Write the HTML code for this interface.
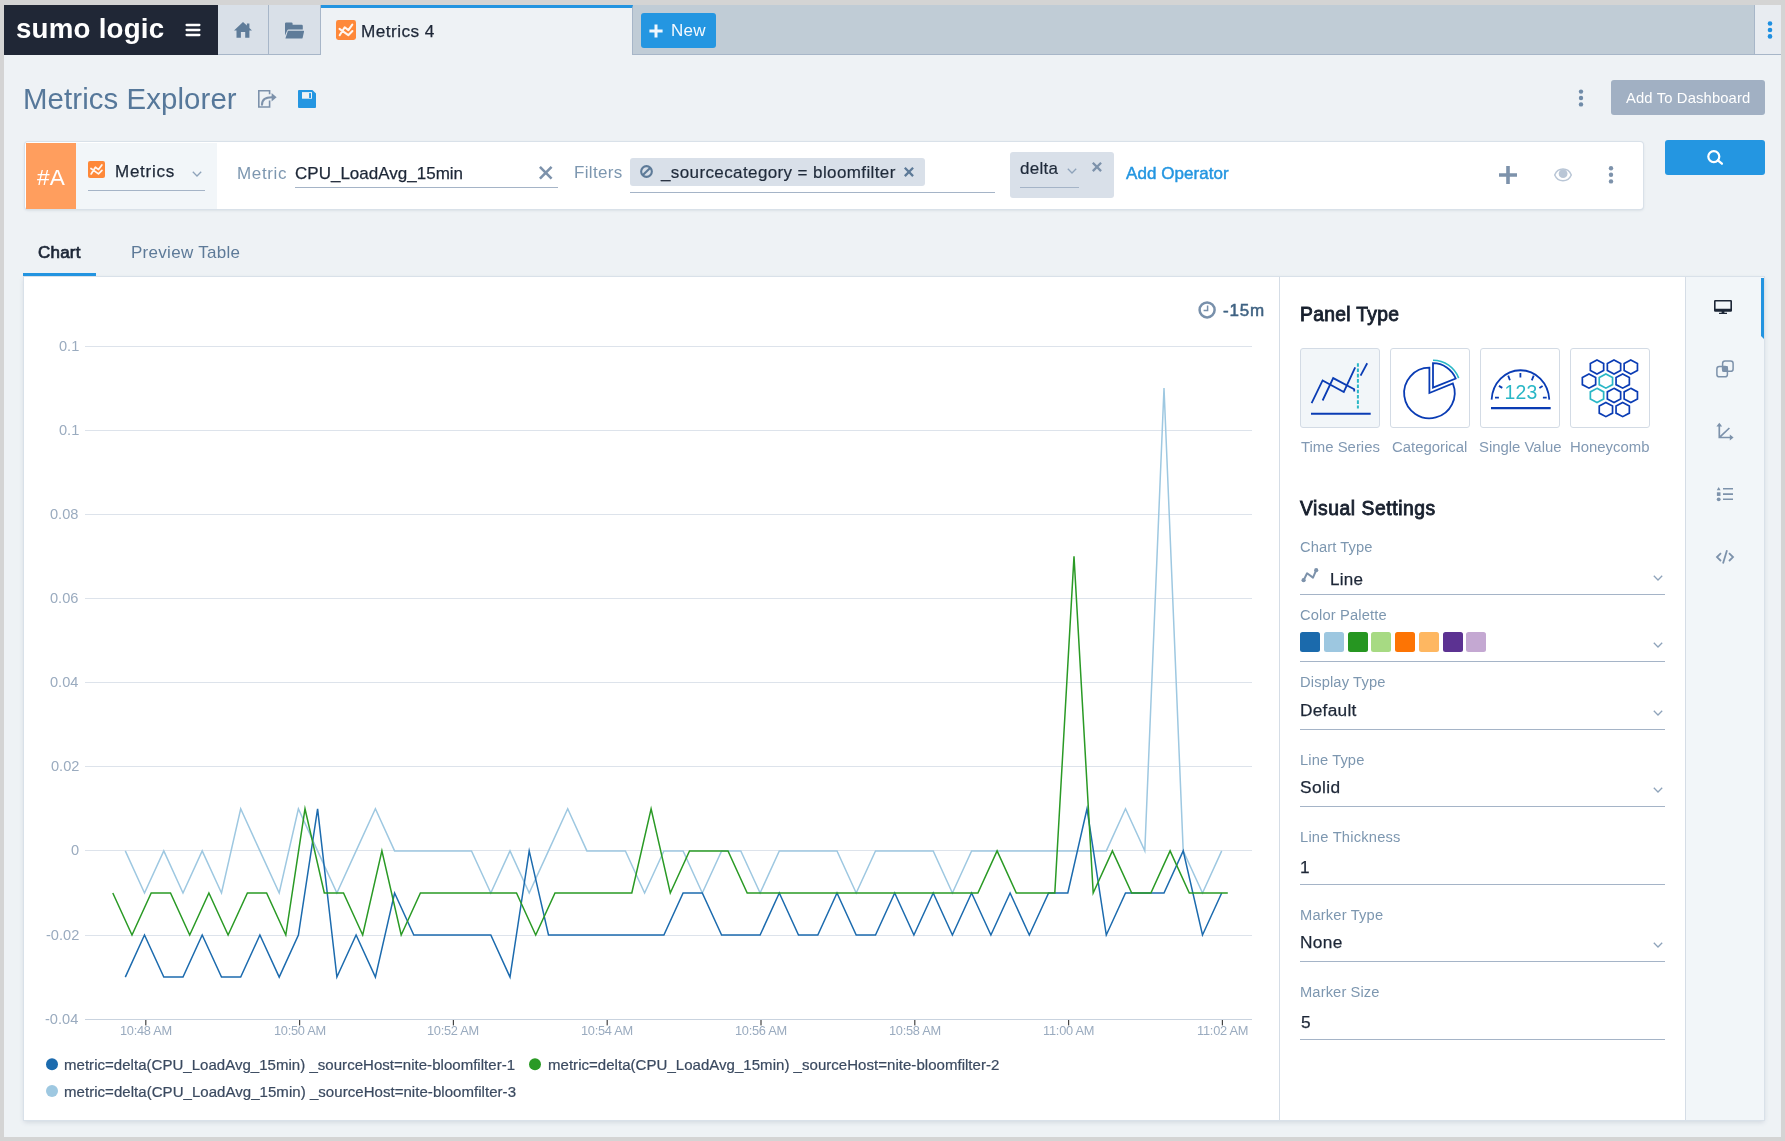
<!DOCTYPE html>
<html lang="en">
<head>
<meta charset="utf-8">
<title>Metrics Explorer - Sumo Logic</title>
<style>
html,body{margin:0;padding:0;background:#d4d4d4;}
body{width:1785px;height:1141px;position:relative;overflow:hidden;background:#d4d4d4;
 font-family:"Liberation Sans",Arial,Helvetica,sans-serif;}
.abs,.t,svg{position:absolute;}
.t{white-space:nowrap;display:block;will-change:transform;}
.hl{position:absolute;height:1px;background:#a5b4c7;}
svg{overflow:visible;}
</style>
</head>
<body>
<div class="abs" id="app" style="left:4px;top:5px;width:1777px;height:1132px;background:#eef2f5;"></div>
<div class="abs" style="left:4px;top:5px;width:1777px;height:49px;background:#c0ccd6;border-bottom:1px solid #a7b6c8;"></div>
<div class="abs" style="left:4px;top:5px;width:214px;height:50px;background:#202736;"></div>
<span class="t" style="left:16.43px;top:14.60px;font-size:27.7px;line-height:27.7px;color:#ffffff;letter-spacing:0.220px;font-weight:bold;">sumo logic</span>
<svg style="left:185px;top:23px" width="16" height="14" viewBox="0 0 16 14"><g stroke="#fff" stroke-width="2.3" stroke-linecap="round"><path d="M1.6 2h12.8M1.6 7h12.8M1.6 12h12.8"/></g></svg>
<div class="abs" style="left:218px;top:5px;width:50px;height:49px;background:#d9e0e8;border-right:1px solid #a7b6c8;"></div>
<svg style="left:234px;top:22px" width="18" height="16" viewBox="0 0 18 16"><path fill="#5f7c99" d="M9 0 L12.9 3.6 V1.4 H15.4 V6 L18 8.5 H15.4 V15.8 H11.2 V10 H6.9 V15.8 H2.5 V8.5 H0 Z"/></svg>
<div class="abs" style="left:269px;top:5px;width:51px;height:49px;background:#d9e0e8;border-right:1px solid #a7b6c8;"></div>
<svg style="left:285px;top:22px" width="19" height="17" viewBox="0 0 19 17"><path fill="#5f7c99" d="M0 1.6 Q0 .4 1.2 .4 H6.4 Q7.6 .4 7.6 1.6 V2.8 H16.6 Q17.8 2.8 17.8 4 V7.4 H3.6 Q2.6 7.4 2.2 8.4 L0 13.6 Z M2.9 8.8 H18.4 Q19.3 8.8 19 9.7 L17.6 15.9 Q17.4 16.6 16.6 16.6 H0.4 Z"/></svg>
<div class="abs" style="left:321px;top:5px;width:312px;height:50px;background:#eef2f5;border-top:3px solid #2394e0;box-sizing:border-box;border-right:1px solid #a7b6c8;"></div>
<svg style="left:336px;top:20px" width="20" height="20" viewBox="0 0 20 20"><rect width="20" height="20" rx="2.4" fill="#fe8839"/><path d="M3.7 15.2 L8.7 7.3 L12.4 10.1 L16.3 4.6 M3.5 8.8 L12.3 15.2 L16.4 11" fill="none" stroke="#fff" stroke-width="2.05" stroke-linecap="round" stroke-linejoin="round" opacity=".92"/></svg>
<span class="t" style="left:360.99px;top:22.80px;font-size:17.2px;line-height:17.2px;color:#1d2737;letter-spacing:0.444px;-webkit-text-stroke:0.25px #1d2737;">Metrics 4</span>
<div class="abs" style="left:641px;top:13px;width:75px;height:35px;background:#2496e1;border-radius:3px;"></div>
<svg style="left:648.5px;top:23.6px" width="14" height="14" viewBox="0 0 14 14"><path d="M7 .4V13.6M.4 7H13.6" stroke="#f1f8fe" stroke-width="3" fill="none"/></svg>
<span class="t" style="left:670.81px;top:22.00px;font-size:17px;line-height:17px;color:#f4f9fe;letter-spacing:0.272px;">New</span>
<div class="abs" style="left:1754px;top:5px;width:27px;height:49px;background:#e8ecf1;border-left:1px solid #a7b6c8;box-sizing:border-box;"></div>
<svg style="left:1766px;top:19px" width="8" height="22" viewBox="0 0 8 22"><g fill="#1e8fe1"><circle cx="4" cy="4.5" r="2.3"/><circle cx="4" cy="11" r="2.3"/><circle cx="4" cy="17.4" r="2.3"/></g></svg>
<span class="t" style="left:23.19px;top:83.80px;font-size:29.4px;line-height:29.4px;color:#56789a;letter-spacing:0.088px;">Metrics Explorer</span>
<svg style="left:257px;top:89px" width="21" height="20" viewBox="0 0 21 20"><g fill="none" stroke="#7d92ab"><path d="M12.6 5.2V1.8H1.8V18H12.6V11.4" stroke-width="1.6"/><path d="M5 15.8C5 10.6 8 8.3 14.8 8.3" stroke-width="2.1" stroke-linecap="round"/></g><path d="M14.6 4 L19.6 8.2 L14.6 12.4 Z" fill="#7d92ab"/></svg>
<svg style="left:298px;top:90px" width="18" height="18" viewBox="0 0 18 18"><path fill="#2496e1" d="M1 0H14.4L18 3.4V17Q18 18 17 18H1Q0 18 0 17V1Q0 0 1 0Z"/><rect x="4" y="2.1" width="10" height="6.6" fill="#eef2f5"/><rect x="11.1" y="3.1" width="1.9" height="4.9" fill="#2496e1"/></svg>
<svg style="left:1577px;top:88px" width="8" height="22" viewBox="0 0 8 22"><g fill="#6f8ba8"><circle cx="4" cy="3.6" r="2.2"/><circle cx="4" cy="10" r="2.2"/><circle cx="4" cy="16.4" r="2.2"/></g></svg>
<div class="abs" style="left:1611px;top:80px;width:154px;height:35px;background:#a1b0c3;border-radius:3px;"></div>
<span class="t" style="left:1626.27px;top:91.00px;font-size:14.8px;line-height:14.8px;color:#ffffff;letter-spacing:0.131px;">Add To Dashboard</span>
<div class="abs" style="left:25px;top:142px;width:1618px;height:67px;background:#fff;border-radius:3px;box-shadow:0 0 0 1px #d9e1e9,0 1px 3px rgba(60,80,110,.22);"></div>
<div class="abs" style="left:26px;top:143px;width:50px;height:66px;background:#ff9e5e;"></div>
<span class="t" style="left:37.10px;top:167.10px;font-size:22.6px;line-height:22.6px;color:#ffffff;letter-spacing:0.100px;">#A</span>
<div class="abs" style="left:76px;top:143px;width:141px;height:66px;background:#f2f6f9;"></div>
<svg style="left:88px;top:161px" width="17" height="17" viewBox="0 0 20 20"><rect width="20" height="20" rx="2.4" fill="#fe8839"/><path d="M3.7 15.2 L8.7 7.3 L12.4 10.1 L16.3 4.6 M3.5 8.8 L12.3 15.2 L16.4 11" fill="none" stroke="#fff" stroke-width="2.05" stroke-linecap="round" stroke-linejoin="round" opacity=".92"/></svg>
<span class="t" style="left:115.01px;top:162.80px;font-size:17px;line-height:17px;color:#1d2737;letter-spacing:0.739px;-webkit-text-stroke:0.25px #1d2737;">Metrics</span>
<svg style="left:192.4px;top:170.6px" width="10" height="6" viewBox="0 0 10 6"><path d="M.8 .8 L5 5 L9.2 .8" fill="none" stroke="#8ea3ba" stroke-width="1.3"/></svg>
<div class="hl" style="left:88px;top:190px;width:117px;"></div>
<span class="t" style="left:237.21px;top:165.00px;font-size:17px;line-height:17px;color:#7d97b0;letter-spacing:0.633px;">Metric</span>
<span class="t" style="left:295.34px;top:165.00px;font-size:17px;line-height:17px;color:#1d2737;letter-spacing:0.010px;-webkit-text-stroke:0.25px #1d2737;">CPU_LoadAvg_15min</span>
<div class="hl" style="left:295px;top:187px;width:263px;"></div>
<svg style="left:538.8px;top:166.3px" width="13.5" height="13.5" viewBox="0 0 13.5 13.5"><path d="M0.92 0.92 L12.58 12.58 M12.58 0.92 L0.92 12.58" fill="none" stroke="#7d92ab" stroke-width="2.6"/></svg>
<span class="t" style="left:573.61px;top:164.00px;font-size:17px;line-height:17px;color:#7d97b0;letter-spacing:0.339px;">Filters</span>
<div class="abs" style="left:630px;top:158px;width:295px;height:28px;background:#d9e0e9;border-radius:3px;"></div>
<svg style="left:639.8px;top:165px" width="13" height="13" viewBox="0 0 13 13"><circle cx="6.5" cy="6.5" r="5.35" fill="none" stroke="#5d7a98" stroke-width="2.1"/><path d="M2.9 10.1 L10.1 2.9" stroke="#5d7a98" stroke-width="2.1"/></svg>
<span class="t" style="left:661.26px;top:164.00px;font-size:17px;line-height:17px;color:#1f2a3a;letter-spacing:0.388px;-webkit-text-stroke:0.2px #1f2a3a;">_sourcecategory = bloomfilter</span>
<svg style="left:903.5px;top:167.4px" width="9.9" height="9.9" viewBox="0 0 9.9 9.9"><path d="M0.81 0.81 L9.09 9.09 M9.09 0.81 L0.81 9.09" fill="none" stroke="#5d7a98" stroke-width="2.3"/></svg>
<div class="hl" style="left:630px;top:192px;width:365px;"></div>
<div class="abs" style="left:1010px;top:152px;width:104px;height:46px;background:#d9e0e9;border-radius:3px;"></div>
<span class="t" style="left:1020.09px;top:160.00px;font-size:17px;line-height:17px;color:#1f2a3a;letter-spacing:0.263px;-webkit-text-stroke:0.2px #1f2a3a;">delta</span>
<svg style="left:1066.6px;top:168px" width="10" height="6" viewBox="0 0 10 6"><path d="M.8 .8 L5 5 L9.2 .8" fill="none" stroke="#8ea3ba" stroke-width="1.3"/></svg>
<div class="hl" style="left:1020px;top:187px;width:59px;"></div>
<svg style="left:1091.6px;top:161.8px" width="9.9" height="9.9" viewBox="0 0 9.9 9.9"><path d="M0.81 0.81 L9.09 9.09 M9.09 0.81 L0.81 9.09" fill="none" stroke="#7d92ab" stroke-width="2.3"/></svg>
<span class="t" style="left:1126.17px;top:165.00px;font-size:17px;line-height:17px;color:#2496e1;letter-spacing:0.060px;-webkit-text-stroke:0.45px #2496e1;">Add Operator</span>
<svg style="left:1499px;top:166px" width="18" height="18" viewBox="0 0 18 18"><path d="M9 0V18M0 9H18" stroke="#7d92ab" stroke-width="3.6" fill="none"/></svg>
<svg style="left:1554px;top:168px" width="18" height="14" viewBox="0 0 18 14"><path d="M.7 7 C4 -.9 14 -.9 17.3 7 C14 14.7 4 14.7 .7 7Z" fill="#fff" stroke="#b9c6d6" stroke-width="1.5"/><circle cx="9.1" cy="5.7" r="4.4" fill="#b9c6d6"/></svg>
<svg style="left:1607px;top:165px" width="8" height="20" viewBox="0 0 8 20"><g fill="#7d92ab"><circle cx="4" cy="3.3" r="2.2"/><circle cx="4" cy="9.8" r="2.2"/><circle cx="4" cy="16.4" r="2.2"/></g></svg>
<div class="abs" style="left:1665px;top:140px;width:100px;height:35px;background:#2496e1;border-radius:3px;"></div>
<svg style="left:1706px;top:149px" width="18" height="18" viewBox="0 0 18 18"><circle cx="7.8" cy="7.6" r="5.5" fill="none" stroke="#fff" stroke-width="2.2"/><path d="M11.9 11.3 L15.9 14.7" stroke="#fff" stroke-width="2.3" stroke-linecap="round"/></svg>
<span class="t" style="left:37.94px;top:243.90px;font-size:17px;line-height:17px;color:#1d2737;letter-spacing:0.204px;-webkit-text-stroke:0.7px #1d2737;">Chart</span>
<span class="t" style="left:131.21px;top:243.90px;font-size:17px;line-height:17px;color:#5d7a98;letter-spacing:0.286px;">Preview Table</span>
<div class="abs" style="left:23px;top:273px;width:73px;height:3px;background:#2394e0;"></div>
<div class="abs" style="left:24px;top:277px;width:1740px;height:843px;background:#fff;box-shadow:0 0 0 1px #d9e1e9,0 2px 5px rgba(60,80,110,.18);"></div>
<div class="abs" style="left:23px;top:273px;width:73px;height:3px;background:#2394e0;"></div>
<div class="abs" style="left:1279px;top:277px;width:1px;height:843px;background:#d5dde6;"></div>
<div class="abs" style="left:1685px;top:277px;width:79px;height:843px;background:#f2f6f9;border-left:1px solid #d5dde6;box-sizing:border-box;"></div>
<svg style="left:1761px;top:278px" width="3" height="61" viewBox="0 0 3 61"><path d="M0 0H3V61L0 58Z" fill="#2394e0"/></svg>
<svg style="left:0;top:0" width="1785" height="1141" viewBox="0 0 1785 1141">
<rect x="85" y="346" width="1167" height="1" fill="#dde3eb"/>
<rect x="85" y="430" width="1167" height="1" fill="#dde3eb"/>
<rect x="85" y="514" width="1167" height="1" fill="#dde3eb"/>
<rect x="85" y="598" width="1167" height="1" fill="#dde3eb"/>
<rect x="85" y="682" width="1167" height="1" fill="#dde3eb"/>
<rect x="85" y="766" width="1167" height="1" fill="#dde3eb"/>
<rect x="85" y="850" width="1167" height="1" fill="#dde3eb"/>
<rect x="85" y="935" width="1167" height="1" fill="#dde3eb"/>
<rect x="85" y="1019" width="1167" height="1" fill="#c9d3df"/>
<rect x="145.2" y="1020" width="1.2" height="5.4" fill="#444"/>
<rect x="299.0" y="1020" width="1.2" height="5.4" fill="#444"/>
<rect x="452.8" y="1020" width="1.2" height="5.4" fill="#444"/>
<rect x="606.6" y="1020" width="1.2" height="5.4" fill="#444"/>
<rect x="760.4" y="1020" width="1.2" height="5.4" fill="#444"/>
<rect x="914.2" y="1020" width="1.2" height="5.4" fill="#444"/>
<rect x="1068.0" y="1020" width="1.2" height="5.4" fill="#444"/>
<rect x="1221.8" y="1020" width="1.2" height="5.4" fill="#444"/>
<polyline points="125.3,850.9 144.5,893.0 163.8,850.9 183.0,893.0 202.2,850.9 221.5,893.0 240.7,808.8 259.9,850.9 279.2,893.0 298.4,808.8 317.6,850.9 336.9,893.0 356.1,850.9 375.4,808.8 394.6,850.9 413.8,850.9 433.1,850.9 452.3,850.9 471.5,850.9 490.8,893.0 510.0,850.9 529.2,893.0 548.5,850.9 567.7,808.8 586.9,850.9 606.2,850.9 625.4,850.9 644.6,893.0 663.9,850.9 683.1,850.9 702.3,893.0 721.6,850.9 740.8,850.9 760.1,893.0 779.3,850.9 798.5,850.9 817.8,850.9 837.0,850.9 856.2,893.0 875.5,850.9 894.7,850.9 913.9,850.9 933.2,850.9 952.4,893.0 971.6,850.9 990.9,850.9 1010.1,850.9 1029.3,850.9 1048.6,850.9 1067.8,850.9 1087.0,850.9 1106.3,850.9 1125.5,808.8 1144.8,850.9 1164.0,388.1 1183.2,850.9 1202.5,893.0 1221.7,850.9" fill="none" stroke="#9ec8e1" stroke-width="1.5" stroke-linejoin="miter" stroke-miterlimit="6"/>
<polyline points="125.3,977.1 144.5,935.0 163.8,977.1 183.0,977.1 202.2,935.0 221.5,977.1 240.7,977.1 259.9,935.0 279.2,977.1 298.4,935.0 317.6,808.8 336.9,977.1 356.1,935.0 375.4,977.1 394.6,893.0 413.8,935.0 433.1,935.0 452.3,935.0 471.5,935.0 490.8,935.0 510.0,977.1 529.2,850.9 548.5,935.0 567.7,935.0 586.9,935.0 606.2,935.0 625.4,935.0 644.6,935.0 663.9,935.0 683.1,893.0 702.3,893.0 721.6,935.0 740.8,935.0 760.1,935.0 779.3,893.0 798.5,935.0 817.8,935.0 837.0,893.0 856.2,935.0 875.5,935.0 894.7,893.0 913.9,935.0 933.2,893.0 952.4,935.0 971.6,893.0 990.9,935.0 1010.1,893.0 1029.3,935.0 1048.6,893.0 1067.8,893.0 1087.0,808.8 1106.3,935.0 1125.5,893.0 1144.8,893.0 1164.0,893.0 1183.2,850.9 1202.5,935.0 1221.7,893.0" fill="none" stroke="#1c6bae" stroke-width="1.5" stroke-linejoin="miter" stroke-miterlimit="6"/>
<polyline points="112.8,893.0 132.0,935.0 151.2,893.0 170.5,893.0 189.7,935.0 208.9,893.0 228.1,935.0 247.4,893.0 266.6,893.0 285.8,935.0 305.0,808.8 324.3,893.0 343.5,893.0 362.7,935.0 381.9,850.9 401.2,935.0 420.4,893.0 439.6,893.0 458.8,893.0 478.1,893.0 497.3,893.0 516.5,893.0 535.7,935.0 555.0,893.0 574.2,893.0 593.4,893.0 612.6,893.0 631.8,893.0 651.1,808.8 670.3,893.0 689.5,850.9 708.7,850.9 728.0,850.9 747.2,893.0 766.4,893.0 785.6,893.0 804.9,893.0 824.1,893.0 843.3,893.0 862.5,893.0 881.8,893.0 901.0,893.0 920.2,893.0 939.4,893.0 958.7,893.0 977.9,893.0 997.1,850.9 1016.3,893.0 1035.6,893.0 1054.8,893.0 1074.0,556.4 1093.2,893.0 1112.4,850.9 1131.7,893.0 1150.9,893.0 1170.1,850.9 1189.3,893.0 1208.6,893.0 1227.8,893.0" fill="none" stroke="#2a9a25" stroke-width="1.5" stroke-linejoin="miter" stroke-miterlimit="6"/>
<circle cx="52" cy="1064.2" r="6" fill="#1c6bae"/>
<circle cx="535" cy="1064.2" r="6" fill="#2a9a25"/>
<circle cx="52" cy="1091" r="6" fill="#9ec8e1"/>
<circle cx="1207.1" cy="309.9" r="7.5" fill="none" stroke="#7890ab" stroke-width="2.5"/>
<path d="M1207.6 305.4 V310.4 H1203.6" fill="none" stroke="#7890ab" stroke-width="1.5"/>
</svg>
<span class="t" style="left:58.62px;top:338.60px;font-size:14.6px;line-height:14.6px;color:#9aabbf;">0.1</span>
<span class="t" style="left:58.62px;top:422.60px;font-size:14.6px;line-height:14.6px;color:#9aabbf;">0.1</span>
<span class="t" style="left:50.42px;top:506.60px;font-size:14.6px;line-height:14.6px;color:#9aabbf;">0.08</span>
<span class="t" style="left:50.43px;top:590.60px;font-size:14.6px;line-height:14.6px;color:#9aabbf;">0.06</span>
<span class="t" style="left:50.21px;top:674.60px;font-size:14.6px;line-height:14.6px;color:#9aabbf;">0.04</span>
<span class="t" style="left:50.52px;top:758.60px;font-size:14.6px;line-height:14.6px;color:#9aabbf;">0.02</span>
<span class="t" style="left:70.65px;top:842.60px;font-size:14.6px;line-height:14.6px;color:#9aabbf;">0</span>
<span class="t" style="left:45.66px;top:927.60px;font-size:14.6px;line-height:14.6px;color:#9aabbf;">-0.02</span>
<span class="t" style="left:45.35px;top:1011.60px;font-size:14.6px;line-height:14.6px;color:#9aabbf;">-0.04</span>
<span class="t" style="left:119.73px;top:1025.10px;font-size:12.8px;line-height:12.8px;color:#9aabbf;letter-spacing:-0.265px;">10:48 AM</span>
<span class="t" style="left:273.52px;top:1025.10px;font-size:12.8px;line-height:12.8px;color:#9aabbf;letter-spacing:-0.265px;">10:50 AM</span>
<span class="t" style="left:427.32px;top:1025.10px;font-size:12.8px;line-height:12.8px;color:#9aabbf;letter-spacing:-0.265px;">10:52 AM</span>
<span class="t" style="left:581.12px;top:1025.10px;font-size:12.8px;line-height:12.8px;color:#9aabbf;letter-spacing:-0.265px;">10:54 AM</span>
<span class="t" style="left:734.92px;top:1025.10px;font-size:12.8px;line-height:12.8px;color:#9aabbf;letter-spacing:-0.265px;">10:56 AM</span>
<span class="t" style="left:888.72px;top:1025.10px;font-size:12.8px;line-height:12.8px;color:#9aabbf;letter-spacing:-0.265px;">10:58 AM</span>
<span class="t" style="left:1042.88px;top:1025.10px;font-size:12.8px;line-height:12.8px;color:#9aabbf;letter-spacing:-0.229px;">11:00 AM</span>
<span class="t" style="left:1196.68px;top:1025.10px;font-size:12.8px;line-height:12.8px;color:#9aabbf;letter-spacing:-0.229px;">11:02 AM</span>
<span class="t" style="left:1222.84px;top:301.90px;font-size:17px;line-height:17px;color:#3f6282;letter-spacing:0.848px;-webkit-text-stroke:0.5px #3f6282;">-15m</span>
<span class="t" style="left:64.00px;top:1057.00px;font-size:15px;line-height:15px;color:#3b4a60;letter-spacing:0.032px;-webkit-text-stroke:0.22px #3b4a60;">metric=delta(CPU_LoadAvg_15min) _sourceHost=nite-bloomfilter-1</span>
<span class="t" style="left:547.60px;top:1057.00px;font-size:15px;line-height:15px;color:#3b4a60;letter-spacing:0.037px;-webkit-text-stroke:0.22px #3b4a60;">metric=delta(CPU_LoadAvg_15min) _sourceHost=nite-bloomfilter-2</span>
<span class="t" style="left:64.00px;top:1083.90px;font-size:15px;line-height:15px;color:#3b4a60;letter-spacing:0.047px;-webkit-text-stroke:0.22px #3b4a60;">metric=delta(CPU_LoadAvg_15min) _sourceHost=nite-bloomfilter-3</span>
<span class="t" style="left:1299.82px;top:304.80px;font-size:19.3px;line-height:19.3px;color:#18202e;letter-spacing:0.314px;-webkit-text-stroke:0.85px #18202e;">Panel Type</span>
<span class="t" style="left:1300.32px;top:498.70px;font-size:19.3px;line-height:19.3px;color:#18202e;letter-spacing:0.576px;-webkit-text-stroke:0.85px #18202e;">Visual Settings</span>
<div class="abs" style="left:1300px;top:348px;width:80px;height:80px;box-sizing:border-box;border:1px solid #d3dbe5;border-radius:3px;background:#f2f6f9;"></div>
<div class="abs" style="left:1390px;top:348px;width:80px;height:80px;box-sizing:border-box;border:1px solid #d3dbe5;border-radius:3px;background:#fff;"></div>
<div class="abs" style="left:1480px;top:348px;width:80px;height:80px;box-sizing:border-box;border:1px solid #d3dbe5;border-radius:3px;background:#fff;"></div>
<div class="abs" style="left:1570px;top:348px;width:80px;height:80px;box-sizing:border-box;border:1px solid #d3dbe5;border-radius:3px;background:#fff;"></div>
<svg style="left:1300px;top:348px" width="80" height="80" viewBox="0 0 80 80"><g fill="none" stroke="#0a3cb4" stroke-width="1.8">
<path d="M11.6 55.2 L22.6 32.4 L43.8 44 L55.2 19.4"/><path d="M22.6 52.5 L33.2 30.1 L54.2 41.2 V43.4"/><path d="M60.6 27.6 L67.2 15.3"/>
<path d="M11 65.7 H70.7" stroke-width="2.1"/><path d="M57.9 15.2 V60.6" stroke="#2ab7c6" stroke-width="2" stroke-dasharray="3.6 1.7"/></g></svg>
<svg style="left:1390px;top:348px" width="80" height="80" viewBox="0 0 80 80"><g fill="none" stroke="#0a3cb4" stroke-width="1.8" stroke-linejoin="miter">
<path d="M39.4 45.0 L39.4 19.70 A25.3 25.3 0 1 0 62.86 35.52 Z"/>
<path d="M43.0 39.7 L43.0 15.20 A24.5 24.5 0 0 1 65.72 30.52 Z"/>
<path d="M43.0 12.30 A27.4 27.4 0 0 1 68.66 30.10" stroke="#2ab7c6" stroke-width="1.6"/></g></svg>
<svg style="left:1480px;top:348px;will-change:transform" width="80" height="80" viewBox="0 0 80 80"><g fill="none" stroke="#0a3cb4" stroke-width="1.8">
<path d="M11.6 51.6 A28.9 31.2 0 0 1 69.3 51.6"/><path d="M11 60.1 H70.7" stroke-width="2.1"/>
<path d="M40.4 25 V29.6 M28.2 27.6 L29.9 32.3 M53.7 27.6 L51.8 32.3 M18.9 37.9 L22.3 39.9 M62.6 37.9 L59.4 39.9 M15 49.7 H18.9 M62.9 49.7 H66.7"/></g>
<text x="41" y="51.3" text-anchor="middle" font-family="'Liberation Sans',Arial,sans-serif" font-size="19.4" letter-spacing=".25" fill="#2ab7c6">123</text></svg>
<svg style="left:1570px;top:348px" width="80" height="80" viewBox="0 0 80 80"><g fill="none" stroke-width="1.7"><polygon points="27.00,11.95 33.65,15.47 33.65,22.52 27.00,26.05 20.35,22.52 20.35,15.47" stroke="#0a3cb4"/><polygon points="44.00,11.95 50.65,15.47 50.65,22.52 44.00,26.05 37.35,22.52 37.35,15.47" stroke="#0a3cb4"/><polygon points="60.80,11.95 67.45,15.47 67.45,22.52 60.80,26.05 54.15,22.52 54.15,15.47" stroke="#0a3cb4"/><polygon points="19.00,26.05 25.65,29.58 25.65,36.62 19.00,40.15 12.35,36.62 12.35,29.58" stroke="#0a3cb4"/><polygon points="52.70,26.05 59.35,29.58 59.35,36.62 52.70,40.15 46.05,36.62 46.05,29.58" stroke="#0a3cb4"/><polygon points="44.00,40.35 50.65,43.88 50.65,50.92 44.00,54.45 37.35,50.92 37.35,43.88" stroke="#0a3cb4"/><polygon points="60.80,40.35 67.45,43.88 67.45,50.92 60.80,54.45 54.15,50.92 54.15,43.88" stroke="#0a3cb4"/><polygon points="35.90,54.55 42.55,58.08 42.55,65.12 35.90,68.65 29.25,65.12 29.25,58.08" stroke="#0a3cb4"/><polygon points="52.70,54.55 59.35,58.08 59.35,65.12 52.70,68.65 46.05,65.12 46.05,58.08" stroke="#0a3cb4"/><polygon points="35.90,26.05 42.55,29.58 42.55,36.62 35.90,40.15 29.25,36.62 29.25,29.58" stroke="#2ab7c6"/><polygon points="27.00,40.35 33.65,43.88 33.65,50.92 27.00,54.45 20.35,50.92 20.35,43.88" stroke="#2ab7c6"/></g></svg>
<span class="t" style="left:1300.64px;top:439.80px;font-size:14.9px;line-height:14.9px;color:#8299b3;">Time Series</span>
<span class="t" style="left:1392.44px;top:439.80px;font-size:14.9px;line-height:14.9px;color:#8299b3;">Categorical</span>
<span class="t" style="left:1478.71px;top:439.80px;font-size:14.9px;line-height:14.9px;color:#8299b3;">Single Value</span>
<span class="t" style="left:1569.95px;top:439.80px;font-size:14.9px;line-height:14.9px;color:#8299b3;">Honeycomb</span>
<span class="t" style="left:1300.45px;top:540.20px;font-size:14.7px;line-height:14.7px;color:#7d97b0;letter-spacing:0.096px;">Chart Type</span>
<svg style="left:1301px;top:568px" width="18" height="15" viewBox="0 0 18 15"><path d="M2.6 12.2 L6.1 5.3 L12 9.6 L15.2 2.2" fill="none" stroke="#7d92ab" stroke-width="2" stroke-linejoin="round"/><circle cx="2.6" cy="12.2" r="2.1" fill="#7d92ab"/><circle cx="15.2" cy="2.2" r="2.1" fill="#7d92ab"/></svg>
<span class="t" style="left:1330.11px;top:570.50px;font-size:17px;line-height:17px;color:#1d2737;letter-spacing:0.236px;-webkit-text-stroke:0.25px #1d2737;">Line</span>
<span class="t" style="left:1300.45px;top:608.00px;font-size:14.7px;line-height:14.7px;color:#7d97b0;letter-spacing:0.152px;">Color Palette</span>
<div class="abs" style="left:1300px;top:632px;width:20px;height:20px;border-radius:2.5px;background:#1b6aac;"></div>
<div class="abs" style="left:1324px;top:632px;width:20px;height:20px;border-radius:2.5px;background:#9dc7e0;"></div>
<div class="abs" style="left:1348px;top:632px;width:20px;height:20px;border-radius:2.5px;background:#269621;"></div>
<div class="abs" style="left:1371px;top:632px;width:20px;height:20px;border-radius:2.5px;background:#a7da83;"></div>
<div class="abs" style="left:1395px;top:632px;width:20px;height:20px;border-radius:2.5px;background:#fd7404;"></div>
<div class="abs" style="left:1419px;top:632px;width:20px;height:20px;border-radius:2.5px;background:#feb761;"></div>
<div class="abs" style="left:1443px;top:632px;width:20px;height:20px;border-radius:2.5px;background:#5c3292;"></div>
<div class="abs" style="left:1466px;top:632px;width:20px;height:20px;border-radius:2.5px;background:#c4a8d2;"></div>
<span class="t" style="left:1300.19px;top:675.20px;font-size:14.7px;line-height:14.7px;color:#7d97b0;letter-spacing:0.143px;">Display Type</span>
<span class="t" style="left:1299.78px;top:702.00px;font-size:17.3px;line-height:17.3px;color:#1d2737;letter-spacing:0.255px;-webkit-text-stroke:0.25px #1d2737;">Default</span>
<span class="t" style="left:1300.19px;top:752.90px;font-size:14.7px;line-height:14.7px;color:#7d97b0;letter-spacing:0.110px;">Line Type</span>
<span class="t" style="left:1300.01px;top:778.90px;font-size:17.3px;line-height:17.3px;color:#1d2737;letter-spacing:0.433px;-webkit-text-stroke:0.25px #1d2737;">Solid</span>
<span class="t" style="left:1300.19px;top:830.20px;font-size:14.7px;line-height:14.7px;color:#7d97b0;letter-spacing:0.212px;">Line Thickness</span>
<span class="t" style="left:1300.28px;top:859.20px;font-size:17.3px;line-height:17.3px;color:#1d2737;-webkit-text-stroke:0.25px #1d2737;">1</span>
<span class="t" style="left:1300.19px;top:908.00px;font-size:14.7px;line-height:14.7px;color:#7d97b0;letter-spacing:0.173px;">Marker Type</span>
<span class="t" style="left:1299.78px;top:934.00px;font-size:17.3px;line-height:17.3px;color:#1d2737;letter-spacing:0.310px;-webkit-text-stroke:0.25px #1d2737;">None</span>
<span class="t" style="left:1300.19px;top:985.00px;font-size:14.7px;line-height:14.7px;color:#7d97b0;letter-spacing:0.114px;">Marker Size</span>
<span class="t" style="left:1300.81px;top:1013.80px;font-size:17.3px;line-height:17.3px;color:#1d2737;-webkit-text-stroke:0.25px #1d2737;">5</span>
<div class="hl" style="left:1300px;top:594px;width:365px;"></div>
<div class="hl" style="left:1300px;top:661px;width:365px;"></div>
<div class="hl" style="left:1300px;top:729px;width:365px;"></div>
<div class="hl" style="left:1300px;top:806px;width:365px;"></div>
<div class="hl" style="left:1300px;top:884px;width:365px;"></div>
<div class="hl" style="left:1300px;top:961px;width:365px;"></div>
<div class="hl" style="left:1300px;top:1039px;width:365px;"></div>
<svg style="left:1652.6px;top:575.4px" width="10" height="6" viewBox="0 0 10 6"><path d="M.8 .8 L5 5 L9.2 .8" fill="none" stroke="#8ea3ba" stroke-width="1.3"/></svg>
<svg style="left:1652.6px;top:642px" width="10" height="6" viewBox="0 0 10 6"><path d="M.8 .8 L5 5 L9.2 .8" fill="none" stroke="#8ea3ba" stroke-width="1.3"/></svg>
<svg style="left:1652.6px;top:710px" width="10" height="6" viewBox="0 0 10 6"><path d="M.8 .8 L5 5 L9.2 .8" fill="none" stroke="#8ea3ba" stroke-width="1.3"/></svg>
<svg style="left:1652.6px;top:786.8px" width="10" height="6" viewBox="0 0 10 6"><path d="M.8 .8 L5 5 L9.2 .8" fill="none" stroke="#8ea3ba" stroke-width="1.3"/></svg>
<svg style="left:1652.6px;top:941.8px" width="10" height="6" viewBox="0 0 10 6"><path d="M.8 .8 L5 5 L9.2 .8" fill="none" stroke="#8ea3ba" stroke-width="1.3"/></svg>
<svg style="left:1714px;top:300px" width="18" height="14" viewBox="0 0 18 14"><path fill="#1d2737" d="M1.2 0H16.8Q18 0 18 1.2V10.6Q18 11.8 16.8 11.8H10.4V12.8H13V14H5V12.8H7.6V11.8H1.2Q0 11.8 0 10.6V1.2Q0 0 1.2 0ZM1.6 1.5V8.8H16.4V1.5Z"/></svg>
<svg style="left:1716px;top:360px" width="18" height="18" viewBox="0 0 18 18"><rect x="6.6" y="1.1" width="10.5" height="10.2" rx="2.4" fill="none" stroke="#7d92ab" stroke-width="1.5"/><rect x=".9" y="6.6" width="10.5" height="10.2" rx="2.4" fill="none" stroke="#7d92ab" stroke-width="1.5"/><rect x="6.2" y="6.2" width="5.6" height="5.4" fill="#7d92ab"/></svg>
<svg style="left:1716px;top:422px" width="19" height="20" viewBox="0 0 19 20"><path d="M3.3 2.5 V15.5 H16 M3.5 15.3 L13.4 6" fill="none" stroke="#7d92ab" stroke-width="1.7"/><path d="M3.3 .8 L6.2 4.6 H.4Z M17.6 15.5 L13.8 18.4 V12.6Z" fill="#7d92ab"/></svg>
<svg style="left:1716px;top:486px" width="18" height="16" viewBox="0 0 18 16"><path d="M7 2.7H17 M7 8.1H17 M7 13.2H17" stroke="#7d92ab" stroke-width="1.6"/><path d="M2.7 .9 L4.6 4.2 H.8Z" fill="#7d92ab"/><rect x=".9" y="6.3" width="3.6" height="3.6" fill="#7d92ab"/><circle cx="2.7" cy="13.3" r="1.9" fill="#7d92ab"/></svg>
<svg style="left:1716px;top:549px" width="18" height="16" viewBox="0 0 18 16"><path d="M5 4.2 L1 8.1 L5 12 M13 4.2 L17 8.1 L13 12 M11 1.2 L7 14.6" fill="none" stroke="#7d92ab" stroke-width="1.8"/></svg>
</body>
</html>
